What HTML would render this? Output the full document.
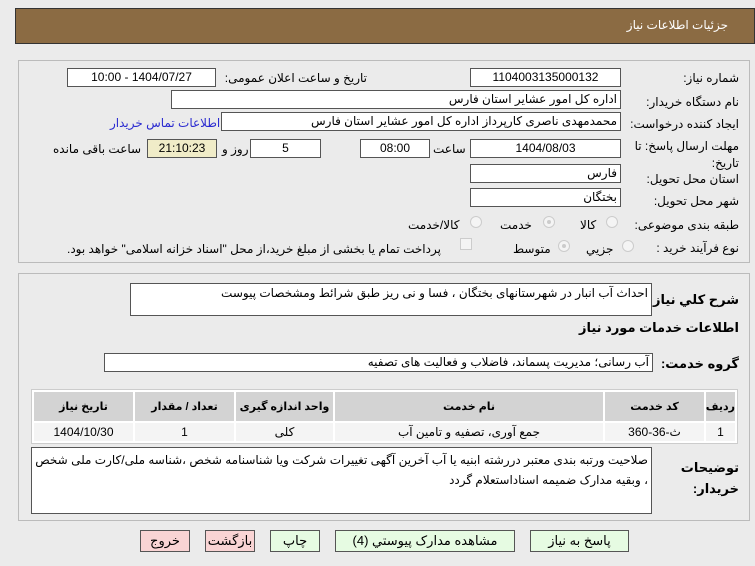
<!DOCTYPE html>
<html><head><meta charset="utf-8"><style>
*{margin:0;padding:0;box-sizing:border-box}
body{width:755px;height:566px;background:#ebebeb;font-family:"Liberation Sans","DejaVu Sans",sans-serif;font-size:12px;color:#000;position:relative;overflow:hidden;direction:rtl}
.a{position:absolute;white-space:nowrap}
.in{position:absolute;background:#fff;border:1px solid #555;height:19px;line-height:17px;padding:0 3px;text-align:right;overflow:hidden}
.c{text-align:center}
.lab{position:absolute;white-space:nowrap;text-align:right}
.panel{position:absolute;border:1px solid #bbb;background:#ebebeb}
.rad{position:absolute;width:12px;height:12px;border-radius:50%;border:1px solid #ccc;background:#f4f4f4}
.rad.on::after{content:"";position:absolute;left:3px;top:3px;width:4px;height:4px;border-radius:50%;background:#ccc}
table{position:absolute;border-collapse:separate;border-spacing:2px;background:#fff;border:1px solid #ccc;table-layout:fixed}
th{background:#d3d3d3;height:29px;font-weight:bold;font-size:11px;white-space:nowrap}
td{background:#f4f4f4;height:18px;text-align:center}
.btn{position:absolute;height:22px;border:1px solid #555;text-align:center;line-height:20px;font-size:13px}
.g{background:#e6fbe2}.p{background:#f9d4d4}
</style></head><body>
<div class="a" style="left:15px;top:8px;width:740px;height:36px;background:#8b6b43;border:1px solid #333"></div>
<div class="a" style="right:27px;top:18px;color:#fff;font-size:12px">جزئیات اطلاعات نیاز</div>

<div class="panel" style="left:18px;top:60px;width:732px;height:203px"></div>
<div class="lab" style="right:16px;top:71px">شماره نیاز:</div>
<div class="in c" style="left:470px;top:68px;width:151px">1104003135000132</div>
<div class="lab" style="right:388px;top:71px">تاریخ و ساعت اعلان عمومی:</div>
<div class="in c" style="left:67px;top:68px;width:149px">1404/07/27 - 10:00</div>

<div class="lab" style="right:16px;top:95px">نام دستگاه خریدار:</div>
<div class="in" style="left:171px;top:90px;width:450px">اداره کل امور عشایر استان فارس</div>

<div class="lab" style="right:16px;top:117px">ایجاد کننده درخواست:</div>
<div class="in" style="left:221px;top:112px;width:400px">محمدمهدی ناصری کارپرداز اداره کل امور عشایر استان فارس</div>
<div class="a" style="left:110px;top:116px;color:#2a2ad0">اطلاعات تماس خریدار</div>

<div class="lab" style="right:16px;top:138px;line-height:17px">مهلت ارسال پاسخ: تا</div>
<div class="lab" style="right:16px;top:155px;line-height:17px">تاریخ:</div>
<div class="in c" style="left:470px;top:139px;width:151px">1404/08/03</div>
<div class="a" style="left:433px;top:142px">ساعت</div>
<div class="in c" style="left:360px;top:139px;width:70px">08:00</div>
<div class="in c" style="left:250px;top:139px;width:71px">5</div>
<div class="a" style="left:222px;top:142px">روز و</div>
<div class="in c" style="left:147px;top:139px;width:70px;background:#f0ecc8">21:10:23</div>
<div class="a" style="left:53px;top:142px">ساعت باقی مانده</div>

<div class="lab" style="right:16px;top:172px">استان محل تحویل:</div>
<div class="in" style="left:470px;top:164px;width:151px">فارس</div>
<div class="lab" style="right:16px;top:194px">شهر محل تحویل:</div>
<div class="in" style="left:470px;top:188px;width:151px">بختگان</div>

<div class="lab" style="right:16px;top:218px">طبقه بندی موضوعی:</div>
<div class="rad" style="left:606px;top:216px"></div><div class="a" style="left:580px;top:218px">کالا</div>
<div class="rad on" style="left:543px;top:216px"></div><div class="a" style="left:500px;top:218px">خدمت</div>
<div class="rad" style="left:470px;top:216px"></div><div class="a" style="left:408px;top:218px">کالا/خدمت</div>

<div class="lab" style="right:16px;top:241px">نوع فرآیند خرید :</div>
<div class="rad" style="left:622px;top:240px"></div><div class="a" style="left:586px;top:242px">جزیي</div>
<div class="rad on" style="left:558px;top:240px"></div><div class="a" style="left:513px;top:242px">متوسط</div>
<div class="a" style="left:460px;top:238px;width:12px;height:12px;border:1px solid #ccc;background:#f4f4f4"></div>
<div class="a" style="left:67px;top:242px">پرداخت تمام یا بخشی از مبلغ خرید،از محل "اسناد خزانه اسلامی" خواهد بود.</div>

<div class="panel" style="left:18px;top:273px;width:732px;height:248px"></div>
<div class="lab" style="right:16px;top:292px;font-weight:bold;font-size:13px">شرح کلي نیاز:</div>
<div class="in" style="left:130px;top:283px;width:522px;height:33px;line-height:18px">احداث آب انبار در شهرستانهای بختگان ، فسا و نی ریز طبق شرائط ومشخصات پیوست</div>
<div class="lab" style="right:16px;top:320px;font-weight:bold;font-size:13px">اطلاعات خدمات مورد نیاز</div>
<div class="lab" style="right:16px;top:356px;font-weight:bold;font-size:13px">گروه خدمت:</div>
<div class="in" style="left:104px;top:353px;width:549px">آب رسانی؛ مدیریت پسماند، فاضلاب و فعالیت های تصفیه</div>

<table style="left:31px;top:389px;width:707px">
<colgroup><col style="width:29px"><col style="width:99px"><col><col style="width:97px"><col style="width:99px"><col style="width:99px"></colgroup>
<tr><th>ردیف</th><th>کد خدمت</th><th>نام خدمت</th><th>واحد اندازه گیری</th><th>تعداد / مقدار</th><th>تاریخ نیاز</th></tr>
<tr><td>1</td><td>ث-36-360</td><td>جمع آوری، تصفیه و تامین آب</td><td>کلی</td><td>1</td><td>1404/10/30</td></tr>
</table>

<div class="lab" style="right:16px;top:460px;font-weight:bold;font-size:13px">توضیحات</div>
<div class="lab" style="right:16px;top:481px;font-weight:bold;font-size:13px">خریدار:</div>
<div class="in" style="left:31px;top:447px;width:621px;height:67px;line-height:20px;white-space:normal;padding-top:2px">صلاحیت ورتبه بندی معتبر دررشته ابنیه یا آب آخرین آگهی تغییرات شرکت ویا شناسنامه شخص ،شناسه ملی/کارت ملی شخص ، وبقیه مدارک ضمیمه اسناداستعلام گردد</div>

<div class="btn p" style="left:140px;top:530px;width:50px">خروج</div>
<div class="btn p" style="left:205px;top:530px;width:50px">بازگشت</div>
<div class="btn g" style="left:270px;top:530px;width:50px">چاپ</div>
<div class="btn g" style="left:335px;top:530px;width:180px">مشاهده مدارک پیوستي (4)</div>
<div class="btn g" style="left:530px;top:530px;width:99px">پاسخ به نیاز</div>
</body></html>
